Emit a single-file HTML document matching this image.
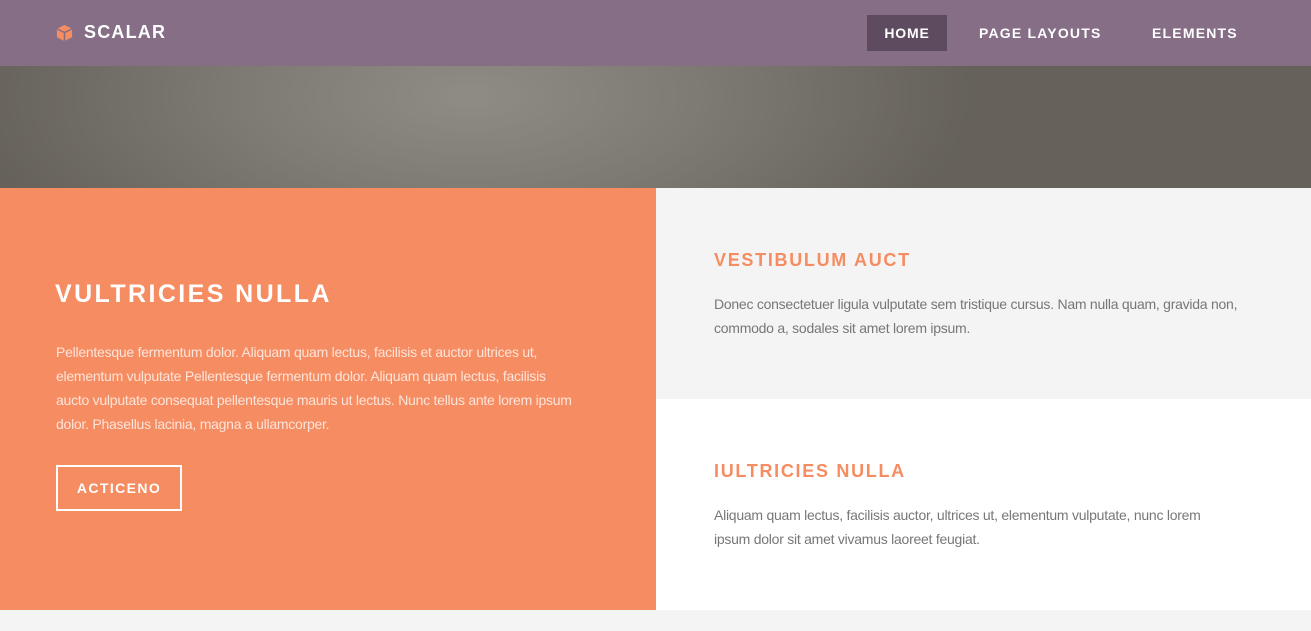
<!DOCTYPE html>
<html><head><style>
*{margin:0;padding:0;box-sizing:border-box}
body{width:1311px;height:631px;overflow:hidden;background:#f4f4f4;font-family:"Liberation Sans",sans-serif}
.nav{position:absolute;left:0;top:0;width:1311px;height:66px;background:#856e86}
.logo{position:absolute;left:55px;top:22px;color:#fff;font-weight:bold;font-size:18px;letter-spacing:1.2px}
.logo svg{position:absolute;left:0;top:2px}
.logo span{position:absolute;left:29px;top:0;white-space:nowrap}
.nav a{position:absolute;top:15px;height:36px;line-height:36px;color:#fff;font-weight:bold;font-size:14px;letter-spacing:1.2px;text-decoration:none;white-space:nowrap}
.hero{position:absolute;left:0;top:66px;width:1311px;height:122px;background:radial-gradient(ellipse 500px 220px at 470px 30px,#8f8b85 0%,#7e7a74 45%,#66615b 100%)}
.left{position:absolute;left:0;top:188px;width:656px;height:422px;background:#f68c61;color:#fff}
.rt{position:absolute;left:656px;top:188px;width:655px;height:211px;background:#f4f4f4}
.rb{position:absolute;left:656px;top:399px;width:655px;height:211px;background:#fff}
h2{position:absolute;font-size:25px;letter-spacing:2.4px;font-weight:bold;white-space:nowrap}
h3{position:absolute;font-size:18px;letter-spacing:1.7px;font-weight:bold;color:#f68c61;white-space:nowrap}
p{position:absolute;font-size:14px;line-height:24px;letter-spacing:-0.25px}
.btn{position:absolute;left:56px;top:277px;width:126px;height:46px;border:2px solid #fff;color:#fff;font-weight:bold;font-size:14px;letter-spacing:1.4px;text-align:center;line-height:42px}
</style></head><body>
<div class="nav">
<div class="logo"><svg width="19" height="19" viewBox="0 0 20 20"><path d="M10 1L18 5V14L10 18L2 14V5Z" fill="#f68c61"/><path d="M2 5L10 9L18 5M10 9V18" stroke="#856e86" stroke-width="1.6" fill="none"/></svg><span>SCALAR</span></div>
<a style="left:867px;width:80px;background:#5e4b5f;text-align:center;letter-spacing:0.8px">HOME</a>
<a style="left:979px">PAGE LAYOUTS</a>
<a style="left:1152px">ELEMENTS</a>
</div>
<div class="hero"></div>
<div class="left">
<h2 style="left:55px;top:92px">VULTRICIES NULLA</h2>
<p style="left:56px;top:152px;width:522px;color:#fde4da">Pellentesque fermentum dolor. Aliquam quam lectus, facilisis et auctor ultrices ut, elementum vulputate Pellentesque fermentum dolor. Aliquam quam lectus, facilisis aucto vulputate consequat pellentesque mauris ut lectus. Nunc tellus ante lorem ipsum dolor. Phasellus lacinia, magna a ullamcorper.</p>
<div class="btn">ACTICENO</div>
</div>
<div class="rt">
<h3 style="left:58px;top:62px">VESTIBULUM AUCT</h3>
<p style="left:58px;top:104px;width:545px;color:#777">Donec consectetuer ligula vulputate sem tristique cursus. Nam nulla quam, gravida non, commodo a, sodales sit amet lorem ipsum.</p>
</div>
<div class="rb">
<h3 style="left:58px;top:62px">IULTRICIES NULLA</h3>
<p style="left:58px;top:104px;width:520px;color:#777">Aliquam quam lectus, facilisis auctor, ultrices ut, elementum vulputate, nunc lorem ipsum dolor sit amet vivamus laoreet feugiat.</p>
</div>
</body></html>
